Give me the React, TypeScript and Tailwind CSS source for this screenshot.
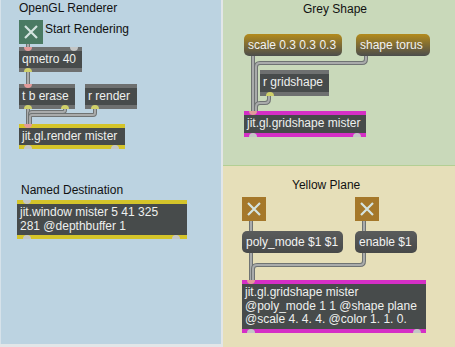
import React from "react";

type Port = { side: "top" | "bottom"; x: number; color?: string };

const font = { fontFamily: '"Liberation Sans", Arial, sans-serif' };

const ObjBox = ({
  left, top, w, h, band, lines, ports,
}: { left: number; top: number; w: number; h: number; band: string; lines: string[]; ports: Port[] }) => (
  <div className="absolute flex flex-col" style={{ left, top, width: w, height: h, background: band }}>
    <div className="flex-1 mx-0 my-[4px] bg-[#474b4b] px-[3px] flex flex-col justify-center text-[12px] leading-[13.5px] text-[#eef0ee]">
      {lines.map((l, i) => (
        <div key={i} className="whitespace-nowrap">{l}</div>
      ))}
    </div>
    {ports.map((p, i) => (
      <div
        key={i}
        className={
          p.side === "top"
            ? "absolute top-0 w-[8px] h-[4px] rounded-b-full"
            : "absolute bottom-0 w-[8px] h-[4px] rounded-t-full"
        }
        style={{ left: p.x, background: p.color || "#c4c6c6" }}
      />
    ))}
  </div>
);

const Msg = ({
  left, top, w, text, from, to,
}: { left: number; top: number; w: number; text: string; from: string; to: string }) => (
  <div
    className="absolute h-[22px] rounded-[5px] px-[4px] flex items-center text-[12px] text-[#f2f2f2] whitespace-nowrap"
    style={{ left, top, width: w, background: `linear-gradient(${from}, ${to})` }}
  >
    {text}
  </div>
);

const Toggle = ({ left, top, bg }: { left: number; top: number; bg: string }) => (
  <div className="absolute w-[24px] h-[24px]" style={{ left, top, background: bg }}>
    <svg width="24" height="24" viewBox="0 0 24 24">
      <path d="M6 6 L18 18 M18 6 L6 18" stroke="#d4e4e0" strokeWidth="2.2" />
    </svg>
  </div>
);

const Cords = ({ paths }: { paths: string[] }) => (
  <svg className="absolute inset-0 pointer-events-none" width="100%" height="100%">
    {paths.map((d, i) => (
      <g key={i} fill="none" strokeLinecap="round" strokeLinejoin="round">
        <path d={d} stroke="#6f7373" strokeWidth="4" />
        <path d={d} stroke="#a9abab" strokeWidth="2" />
      </g>
    ))}
  </svg>
);

const Label = ({ left, top, text }: { left: number; top: number; text: string }) => (
  <div className="absolute text-[12px] leading-[14px] text-[#111] whitespace-nowrap" style={{ left, top }}>
    {text}
  </div>
);

const pink = "#e39a9a";
const olive = "#cfd06a";
const yellowBand = "#d4c42a";
const magenta = "#d52fc6";

export default function App() {
  return (
    <div className="w-[455px] h-[347px] bg-[#e2e6e8] flex gap-[2px] overflow-hidden" style={font}>
      {/* OpenGL Renderer */}
      <div className="relative w-[221px] h-[344px] bg-[#bcd3e1] border-l border-[#d6e2ea]">
        <Cords
          paths={[
            "M27 44 V48",
            "M27 72 V85",
            "M27 109 V125",
            "M64 109 V110 Q64 112 62 112 H31 Q29 112 29 114 V125",
            "M94 109 V113 Q94 115 92 115 H31 Q29 115 29 117 V125",
          ]}
        />
        <Label left={18} top={1} text="OpenGL Renderer" />
        <Toggle left={18} top={20} bg="#4a7a63" />
        <Label left={44} top={22} text="Start Rendering" />
        <ObjBox left={18} top={47} w={63} h={25} band="#6e7070" lines={["qmetro 40"]}
          ports={[{ side: "top", x: 5, color: pink }, { side: "top", x: 51 }, { side: "bottom", x: 5, color: olive }]} />
        <ObjBox left={18} top={84} w={56} h={25} band="#6e7070" lines={["t b erase"]}
          ports={[{ side: "top", x: 5, color: pink }, { side: "bottom", x: 5, color: olive }, { side: "bottom", x: 42, color: olive }]} />
        <ObjBox left={84} top={84} w={52} h={25} band="#6e7070" lines={["r render"]}
          ports={[{ side: "bottom", x: 6, color: olive }]} />
        <ObjBox left={18} top={124} w={106} h={25} band={yellowBand} lines={["jit.gl.render mister"]}
          ports={[{ side: "top", x: 5, color: pink }, { side: "bottom", x: 5 }, { side: "bottom", x: 92 }]} />
        <Label left={20} top={183} text="Named Destination" />
        <ObjBox left={16} top={200} w={170} h={39} band={yellowBand}
          lines={["jit.window mister 5 41 325", "281 @depthbuffer 1"]}
          ports={[{ side: "top", x: 6 }, { side: "bottom", x: 6 }, { side: "bottom", x: 155 }]} />
      </div>

      <div className="w-[232px] h-[347px] flex flex-col">
        {/* Grey Shape */}
        <div className="relative h-[166px] bg-[#c9d9ba] border-b border-[#b3cf94]">
          <Cords
            paths={[
              "M30 56 V112",
              "M143 56 V59 Q143 63 139 63 H37 Q33 63 33 67 V112",
              "M46 96 V99 Q46 103 42 103 H37 Q33 103 33 107 V112",
            ]}
          />
          <Label left={80} top={2} text="Grey Shape" />
          <Msg left={21} top={34} w={98} text="scale 0.3 0.3 0.3" from="#b38b1c" to="#4b4d4c" />
          <Msg left={133} top={34} w={74} text="shape torus" from="#b38b1c" to="#4b4d4c" />
          <ObjBox left={37} top={70} w={69} h={26} band="#6e7070" lines={["r gridshape"]}
            ports={[{ side: "bottom", x: 6, color: olive }]} />
          <ObjBox left={21} top={111} w={122} h={26} band={magenta} lines={["jit.gl.gridshape mister"]}
            ports={[{ side: "top", x: 5, color: pink }, { side: "bottom", x: 5 }, { side: "bottom", x: 109 }]} />
        </div>

        {/* Yellow Plane */}
        <div className="relative flex-1 bg-[#e6dfb9]">
          <Cords
            paths={[
              "M28 55 V65",
              "M141 55 V65",
              "M28 87 V115",
              "M141 87 V95 Q141 99 137 99 H34 Q30 99 30 103 V115",
            ]}
          />
          <Label left={69} top={12} text="Yellow Plane" />
          <Toggle left={19} top={31} bg="#a5782a" />
          <Toggle left={132} top={31} bg="#a5782a" />
          <Msg left={19} top={65} w={101} text="poly_mode $1 $1" from="#5a5c5c" to="#474949" />
          <Msg left={132} top={65} w={62} text="enable $1" from="#5a5c5c" to="#474949" />
          <ObjBox left={19} top={114} w={184} h={53} band={magenta}
            lines={["jit.gl.gridshape mister", "@poly_mode 1 1 @shape plane", "@scale 4. 4. 4. @color 1. 1. 0."]}
            ports={[{ side: "top", x: 5, color: pink }, { side: "bottom", x: 5 }, { side: "bottom", x: 171 }]} />
        </div>
      </div>
    </div>
  );
}
